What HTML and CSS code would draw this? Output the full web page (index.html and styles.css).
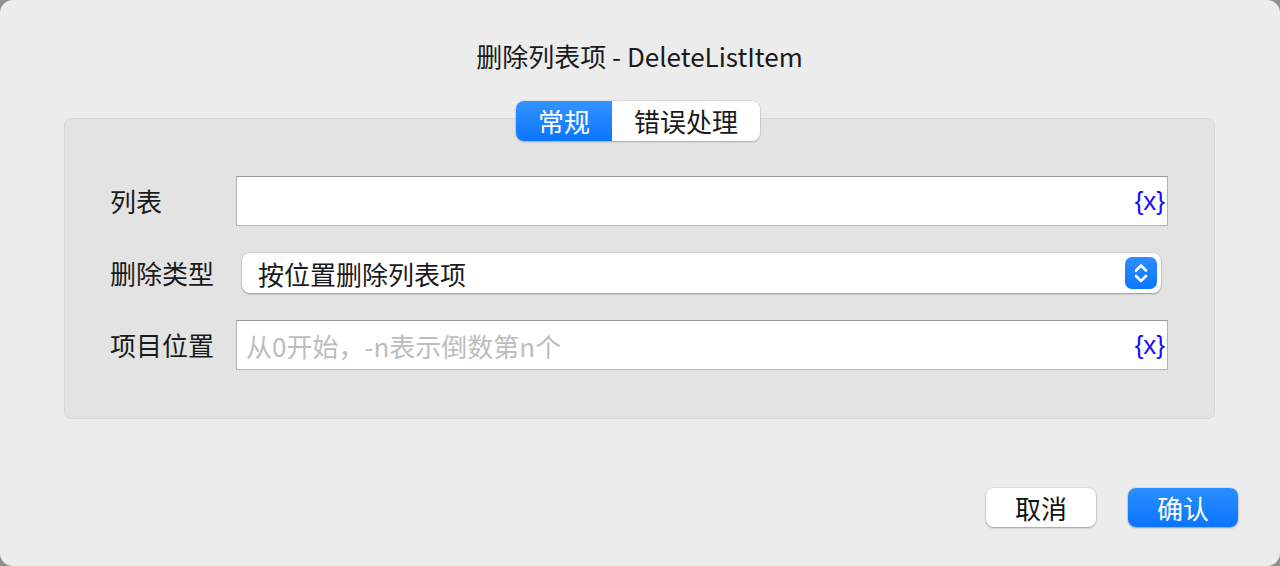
FILE: index.html
```html
<!DOCTYPE html>
<html lang="zh-CN">
<head>
<meta charset="utf-8">
<link rel="stylesheet" href="styles.css">
</head>
<body>
<div class="window">
  <div class="title">删除列表项 - DeleteListItem</div>
  <div class="tabs">
    <div class="tab tab-active">常规</div>
    <div class="tab">错误处理</div>
  </div>
  <div class="group">
    <div class="row">
      <div class="label">列表</div>
      <div class="input"><span class="value"></span><span class="var">{x}</span></div>
    </div>
    <div class="row">
      <div class="label">删除类型</div>
      <div class="select">
        <span class="value">按位置删除列表项</span>
        <span class="stepper">
          <svg width="32" height="32" viewBox="0 0 32 32"><path d="M11 13.5 L16 8.5 L21 13.5 M11 19 L16 24 L21 19" fill="none" stroke="#fff" stroke-width="2.6" stroke-linecap="round" stroke-linejoin="round"/></svg>
        </span>
      </div>
    </div>
    <div class="row">
      <div class="label">项目位置</div>
      <div class="input"><span class="placeholder">从0开始，-n表示倒数第n个</span><span class="var">{x}</span></div>
    </div>
  </div>
  <div class="actions">
    <div class="btn">取消</div>
    <div class="btn btn-primary">确认</div>
  </div>
</div>
</body>
</html>
```

FILE: styles.css
```css
html, body {
  margin: 0;
  padding: 0;
}
body {
  background: #8f8f8f;
  font-family: "Noto Sans CJK SC", "Noto Sans", sans-serif;
  color: #1d1d1d;
}
.window {
  width: 1280px;
  height: 566px;
  box-sizing: border-box;
  background: #ececec;
  border-radius: 13px;
  display: flex;
  flex-direction: column;
  padding: 38px 65px 0 64px;
  overflow: hidden;
}
.title {
  text-align: center;
  font-size: 26px;
  line-height: 36px;
  height: 36px;
  color: #1a1a1a;
}
.tabs {
  align-self: center;
  display: flex;
  height: 40px;
  margin-top: 27px;
  margin-left: -3px;
  border-radius: 8px;
  background: #fff;
  box-shadow: 0 0 0 1px rgba(0,0,0,0.06), 0 1px 2px rgba(0,0,0,0.2);
  position: relative;
  z-index: 2;
  font-size: 26px;
  line-height: 40px;
}
.tab {
  width: 148px;
  text-align: center;
  color: #1a1a1a;
}
.tab-active {
  width: 96px;
  color: #fff;
  border-radius: 8px 0 0 8px;
  background: linear-gradient(#3393ff, #0a75ff);
}
.group {
  margin-top: -23px;
  height: 301px;
  box-sizing: border-box;
  background: #e3e3e3;
  border: 1px solid #d8d8d8;
  border-radius: 7px;
  padding: 57px 46px 0 45px;
  display: flex;
  flex-direction: column;
  gap: 27px;
}
.row {
  display: flex;
  align-items: center;
}
.label {
  width: 126px;
  flex: none;
  font-size: 26px;
  line-height: 32px;
  color: #1a1a1a;
}
.input {
  flex: 1;
  height: 50px;
  box-sizing: border-box;
  background: #fff;
  border: 1px solid #b2b2b2;
  border-top-color: #999;
  display: flex;
  align-items: center;
  padding: 0 2px 0 9px;
  font-size: 26px;
}
.input .value, .input .placeholder {
  flex: 1;
}
.placeholder {
  color: #bdbdbd;
}
.var {
  color: #1010ff;
  font-family: "Liberation Sans", "Noto Sans", sans-serif;
  font-size: 26px;
}
.select {
  flex: 1;
  height: 40px;
  margin: 0 7px 0 6px;
  box-sizing: border-box;
  background: #fff;
  border-radius: 8px;
  box-shadow: 0 0 0 1px rgba(0,0,0,0.05), 0 1px 2px rgba(0,0,0,0.3);
  display: flex;
  align-items: center;
  padding: 0 4px 0 16px;
  font-size: 26px;
  color: #1a1a1a;
}
.select .value {
  flex: 1;
}
.stepper {
  width: 32px;
  height: 32px;
  border-radius: 7px;
  background: linear-gradient(#2f8dff, #0a76ff);
  display: flex;
}
.actions {
  display: flex;
  justify-content: flex-end;
  gap: 32px;
  margin-top: 69px;
  margin-right: -23px;
}
.btn {
  width: 110px;
  height: 39px;
  border-radius: 8px;
  background: #fff;
  box-shadow: 0 0 0 1px rgba(0,0,0,0.05), 0 1px 2px rgba(0,0,0,0.3);
  text-align: center;
  font-size: 26px;
  line-height: 39px;
  color: #111;
}
.btn-primary {
  color: #fff;
  background: linear-gradient(#2a8fff, #0a74ff);
}
```
